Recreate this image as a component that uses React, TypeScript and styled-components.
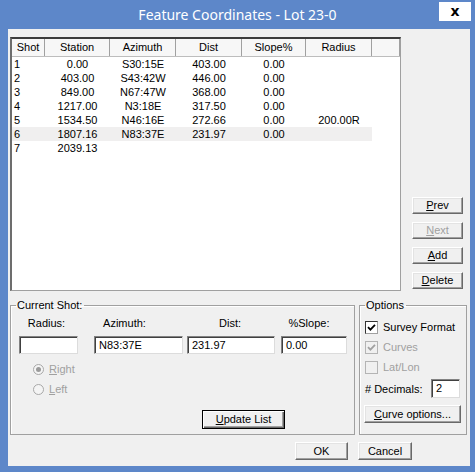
import React from "react";
import styled, { createGlobalStyle } from "styled-components";

const GlobalStyle = createGlobalStyle`
  html, body {
    margin: 0;
    padding: 0;
    background: #5d87c9;
  }
  body {
    font-family: "Liberation Sans", Arial, sans-serif;
    font-size: 11px;
    color: #000;
  }
`;

const Window = styled.div`
  width: 475px;
  height: 472px;
  background: #5d87c9;
  display: flex;
  flex-direction: column;
`;

const TitleBar = styled.div`
  height: 29px;
  flex: none;
  display: grid;
  grid-template-columns: 1fr auto 1fr;
  align-items: start;
`;

const Title = styled.div`
  grid-column: 2;
  font-family: "Noto Sans", "Open Sans", sans-serif;
  font-size: 14px;
  line-height: 29px;
  color: #fff;
  white-space: nowrap;
`;

const CloseBox = styled.div`
  grid-column: 3;
  justify-self: end;
  margin: 2px 4px 0 0;
  width: 32px;
  height: 19px;
  background: #fff;
  display: flex;
  align-items: center;
  justify-content: center;
  font-family: "DejaVu Sans", sans-serif;
  font-weight: bold;
  font-size: 14px;
  line-height: 1;
  padding-bottom: 2px;
  box-sizing: border-box;
`;

const Client = styled.div`
  flex: 1;
  margin: 0 5px 6px 8px;
  background: #f0f0f0;
  display: flex;
  flex-direction: column;
  padding: 8px 0 6px 2px;
  box-sizing: border-box;
`;

const TopRow = styled.div`
  display: flex;
  gap: 11px;
  height: 254px;
`;

const List = styled.div`
  width: 391px;
  height: 254px;
  box-sizing: border-box;
  background: #fff;
  border-style: solid;
  border-width: 2px 1px 1px 2px;
  border-color: #3c3c3c #a0a0a0 #a0a0a0 #6d6d6d;
  overflow: hidden;
`;

const cols = "33px 65px 66px 66px 64px 66px";

const HeaderRow = styled.div`
  display: grid;
  grid-template-columns: ${cols} 1fr;
  height: 18px;
  background: #f7f7f7;
  border-bottom: 1px solid #bdbdbd;
  box-sizing: border-box;
`;

const HeaderCell = styled.div`
  border-right: 1px solid #a0a0a0;
  display: flex;
  align-items: center;
  justify-content: center;
  line-height: 17px;
`;

const Row = styled.div<{ $selected?: boolean }>`
  display: grid;
  grid-template-columns: ${cols};
  width: 360px;
  height: 14px;
  line-height: 14px;
  background: ${(p) => (p.$selected ? "#f0efef" : "transparent")};
`;

const Cell = styled.div<{ $left?: boolean }>`
  text-align: ${(p) => (p.$left ? "left" : "center")};
  padding-left: ${(p) => (p.$left ? "2px" : "0")};
  white-space: nowrap;
`;

const SideButtons = styled.div`
  display: flex;
  flex-direction: column;
  justify-content: flex-end;
  gap: 8px;
  padding-bottom: 2px;
`;

const Button = styled.button<{ $w: number; $h?: number; $default?: boolean }>`
  width: ${(p) => p.$w}px;
  height: ${(p) => p.$h ?? 17}px;
  padding: 0;
  margin: 0;
  font-family: "Liberation Sans", Arial, sans-serif;
  font-size: 11px;
  color: #000;
  background: #f0f0f0;
  border: 1px solid;
  border-color: ${(p) => (p.$default ? "#000" : "#fff #696969 #696969 #fff")};
  box-shadow: ${(p) =>
    p.$default
      ? "inset 1px 1px 0 #fff, inset -1px -1px 0 #696969, inset -2px -2px 0 #a0a0a0"
      : "inset -1px -1px 0 #a0a0a0, inset 1px 1px 0 #e3e3e3"};
  box-sizing: border-box;
  line-height: 1;

  &:disabled {
    color: #a0a0a0;
  }

  u {
    text-decoration: underline;
    text-underline-offset: 1px;
  }
`;

const MiddleRow = styled.div`
  display: flex;
  gap: 4px;
  margin-top: 8px;
  height: 136px;
`;

const Group = styled.fieldset<{ $w: number }>`
  width: ${(p) => p.$w}px;
  margin: 0;
  padding: 0;
  box-sizing: border-box;
  border: 1px solid #a0a0a0;
  box-shadow: inset 1px 1px 0 #fff;
  display: flex;
  flex-direction: column;
  min-width: 0;
`;

const Legend = styled.legend`
  margin-left: 5px;
  padding: 0 2px 0 1px;
  line-height: 13px;
  font-size: 11px;
`;

const ShotBody = styled.div`
  display: flex;
  flex-direction: column;
  padding: 5px 0 0 8px;
`;

const Fields = styled.div`
  display: flex;
`;

const Field = styled.div<{ $w: number; $ml: number }>`
  width: ${(p) => p.$w}px;
  margin-left: ${(p) => p.$ml}px;
  display: flex;
  flex-direction: column;
  gap: 6px;
`;

const FieldLabel = styled.div<{ $shift?: number }>`
  height: 13px;
  line-height: 13px;
  text-align: center;
  margin-left: ${(p) => p.$shift ?? 0}px;
  white-space: nowrap;
`;

const TextBox = styled.div<{ $w?: number; $h?: number }>`
  width: ${(p) => (p.$w ? `${p.$w}px` : "100%")};
  height: ${(p) => p.$h ?? 18}px;
  box-sizing: border-box;
  background: #fff;
  border: 1px solid;
  border-color: #828282 #dcdcdc #dcdcdc #828282;
  box-shadow: inset 1px 1px 0 #404040;
  padding: 0 0 0 4px;
  line-height: ${(p) => (p.$h ?? 18) - 2}px;
  white-space: nowrap;
`;

const Radios = styled.div`
  display: flex;
  flex-direction: column;
  margin: 5px 0 0 14px;
`;

const RadioRow = styled.div`
  display: flex;
  align-items: center;
  gap: 5px;
  height: 20px;
  color: #a0a0a0;
`;

const RadioDot = styled.span<{ $checked?: boolean }>`
  width: 11px;
  height: 11px;
  box-sizing: border-box;
  border-radius: 50%;
  border: 1px solid #a8a8a8;
  background: #f4f4f4;
  display: flex;
  align-items: center;
  justify-content: center;

  &::after {
    content: "";
    width: 5px;
    height: 5px;
    border-radius: 50%;
    background: #9a9a9a;
    display: ${(p) => (p.$checked ? "block" : "none")};
  }
`;

const UpdateWrap = styled.div`
  margin: 11px 0 0 183px;
`;

const OptBody = styled.div`
  display: flex;
  flex-direction: column;
  padding: 5px 0 0 5px;
`;

const CheckRow = styled.div<{ $disabled?: boolean }>`
  display: flex;
  align-items: center;
  gap: 5px;
  height: 20px;
  color: ${(p) => (p.$disabled ? "#a0a0a0" : "#000")};
`;

const Box = styled.span<{ $disabled?: boolean }>`
  width: 13px;
  height: 13px;
  box-sizing: border-box;
  border: 1px solid;
  border-color: ${(p) => (p.$disabled ? "#b4b4b4" : "#333 #a0a0a0 #a0a0a0 #333")};
  background: ${(p) => (p.$disabled ? "#f0f0f0" : "#fff")};
  display: flex;
  align-items: center;
  justify-content: center;
`;

const DecRow = styled.div`
  display: flex;
  align-items: center;
  margin-top: 2px;
`;

const DecLabel = styled.div`
  width: 66px;
  white-space: nowrap;
`;

const CurveWrap = styled.div`
  margin: 7px 0 0 -1px;
`;

const BottomRow = styled.div`
  display: flex;
  justify-content: flex-end;
  gap: 10px;
  margin-top: 7px;
  padding-right: 58px;
`;

const rows = [
  ["1", "0.00", "S30:15E", "403.00", "0.00", ""],
  ["2", "403.00", "S43:42W", "446.00", "0.00", ""],
  ["3", "849.00", "N67:47W", "368.00", "0.00", ""],
  ["4", "1217.00", "N3:18E", "317.50", "0.00", ""],
  ["5", "1534.50", "N46:16E", "272.66", "0.00", "200.00R"],
  ["6", "1807.16", "N83:37E", "231.97", "0.00", ""],
  ["7", "2039.13", "", "", "", ""],
];

const headers = ["Shot", "Station", "Azimuth", "Dist", "Slope%", "Radius", ""];

const Check = ({ color }: { color: string }) => (
  <svg width="9" height="9" viewBox="0 0 9 9">
    <path d="M1 4.2 L3.4 6.6 L8 1.8" fill="none" stroke={color} strokeWidth="1.8" />
  </svg>
);

const App = () => {
  return (
    <>
      <GlobalStyle />
      <Window>
        <TitleBar>
          <Title>Feature Coordinates - Lot 23-0</Title>
          <CloseBox>x</CloseBox>
        </TitleBar>
        <Client>
          <TopRow>
            <List>
              <HeaderRow>
                {headers.map((h, i) => (
                  <HeaderCell key={i}>{h}</HeaderCell>
                ))}
              </HeaderRow>
              {rows.map((r, i) => (
                <Row key={i} $selected={i === 5}>
                  {r.map((c, j) => (
                    <Cell key={j} $left={j === 0}>
                      {c}
                    </Cell>
                  ))}
                </Row>
              ))}
            </List>
            <SideButtons>
              <Button $w={51}>
                <u>P</u>rev
              </Button>
              <Button $w={51} disabled>
                <u>N</u>ext
              </Button>
              <Button $w={51}>
                <u>A</u>dd
              </Button>
              <Button $w={51}>
                <u>D</u>elete
              </Button>
            </SideButtons>
          </TopRow>

          <MiddleRow>
            <Group $w={345}>
              <Legend>Current Shot:</Legend>
              <ShotBody>
                <Fields>
                  <Field $w={59} $ml={0}>
                    <FieldLabel $shift={-4}>Radius:</FieldLabel>
                    <TextBox />
                  </Field>
                  <Field $w={89} $ml={16}>
                    <FieldLabel $shift={-28}>Azimuth:</FieldLabel>
                    <TextBox>N83:37E</TextBox>
                  </Field>
                  <Field $w={88} $ml={4}>
                    <FieldLabel $shift={-2}>Dist:</FieldLabel>
                    <TextBox>231.97</TextBox>
                  </Field>
                  <Field $w={66} $ml={6}>
                    <FieldLabel $shift={-10}>%Slope:</FieldLabel>
                    <TextBox>0.00</TextBox>
                  </Field>
                </Fields>
                <Radios>
                  <RadioRow>
                    <RadioDot $checked />
                    <span>
                      <u>R</u>ight
                    </span>
                  </RadioRow>
                  <RadioRow>
                    <RadioDot />
                    <span>
                      <u>L</u>eft
                    </span>
                  </RadioRow>
                </Radios>
                <UpdateWrap>
                  <Button $w={83} $h={19} $default>
                    <u>U</u>pdate List
                  </Button>
                </UpdateWrap>
              </ShotBody>
            </Group>

            <Group $w={108}>
              <Legend>Options</Legend>
              <OptBody>
                <CheckRow>
                  <Box>
                    <Check color="#000" />
                  </Box>
                  Survey Format
                </CheckRow>
                <CheckRow $disabled>
                  <Box $disabled>
                    <Check color="#a0a0a0" />
                  </Box>
                  Curves
                </CheckRow>
                <CheckRow $disabled>
                  <Box $disabled />
                  Lat/Lon
                </CheckRow>
                <DecRow>
                  <DecLabel># Decimals:</DecLabel>
                  <TextBox $w={29} $h={19}>
                    2
                  </TextBox>
                </DecRow>
                <CurveWrap>
                  <Button $w={97} $h={18}>
                    <u>C</u>urve options...
                  </Button>
                </CurveWrap>
              </OptBody>
            </Group>
          </MiddleRow>

          <BottomRow>
            <Button $w={53} $h={18}>
              OK
            </Button>
            <Button $w={54} $h={18}>
              Cancel
            </Button>
          </BottomRow>
        </Client>
      </Window>
    </>
  );
};

export default App;
